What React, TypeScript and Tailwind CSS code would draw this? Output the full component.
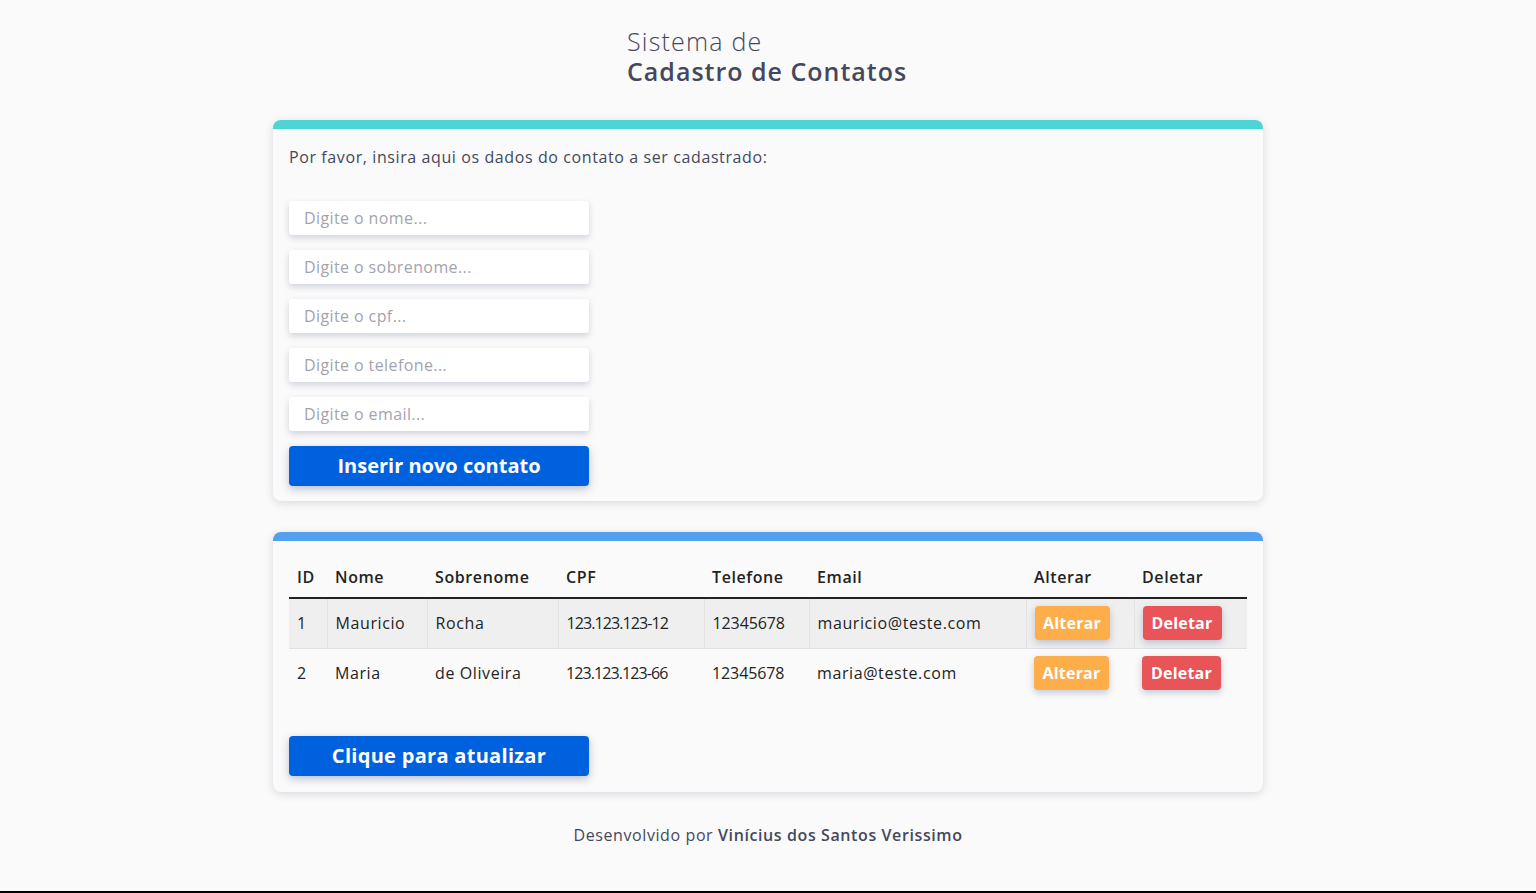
import * as React from "react";

const font = { fontFamily: '"Open Sans", "Noto Sans", sans-serif' };

const campos = [
  "Digite o nome...",
  "Digite o sobrenome...",
  "Digite o cpf...",
  "Digite o telefone...",
  "Digite o email...",
];

const contatos = [
  { id: 1, nome: "Mauricio", sobrenome: "Rocha", cpf: "123.123.123-12", telefone: "12345678", email: "mauricio@teste.com" },
  { id: 2, nome: "Maria", sobrenome: "de Oliveira", cpf: "123.123.123-66", telefone: "12345678", email: "maria@teste.com" },
];

const colunas = [
  { label: "ID", w: "w-[38px]" },
  { label: "Nome", w: "w-[100px]" },
  { label: "Sobrenome", w: "w-[131px]" },
  { label: "CPF", w: "w-[146px]" },
  { label: "Telefone", w: "w-[105px]" },
  { label: "Email", w: "w-[217px]" },
  { label: "Alterar", w: "w-[108px]" },
  { label: "Deletar", w: "w-[113px]" },
];

const cellText = [
  "tracking-normal",
  "",
  "",
  "tracking-[-0.9px]",
  "tracking-[-0.1px]",
  "",
];

export default function App() {
  return (
    <div className="min-h-[893px] bg-[#fafafa] flex flex-col text-[#45485c]" style={font}>
      <div className="flex-1 flex flex-col items-center">
        <header className="mt-[26px] w-[282px] leading-[30px]">
          <div className="text-[25px] font-light tracking-[1.2px]">Sistema de</div>
          <div className="text-[25px] font-semibold tracking-[1px]">Cadastro de Contatos</div>
        </header>

        <section className="mt-[34px] w-[990px] rounded-lg border-t-[9px] border-[#4dd4d5] bg-[#fafafa] px-4 pt-[17px] pb-[15px] shadow-[0_2px_8px_rgba(60,70,100,0.18)]">
          <p className="text-[16px] leading-[22px] tracking-[0.6px] text-[#45485c]">
            Por favor, insira aqui os dados do contato a ser cadastrado:
          </p>
          <form className="mt-[33px] flex w-[300px] flex-col gap-[15px]" onSubmit={(e) => e.preventDefault()}>
            {campos.map((c) => (
              <input
                key={c}
                placeholder={c}
                className="h-[34px] w-full rounded-[3px] bg-white px-[15px] text-[16px] tracking-[0.4px] text-[#333] placeholder:text-[#a3a3ad] shadow-[0_3px_6px_rgba(40,60,110,0.2)] outline-none"
              />
            ))}
            <button className="h-[40px] w-full rounded-[4px] bg-[#0061df] text-[20px] font-bold text-white shadow-[0_3px_8px_rgba(40,60,110,0.3)]">
              Inserir novo contato
            </button>
          </form>
        </section>

        <section className="mt-[31px] w-[990px] rounded-lg border-t-[9px] border-[#539ff0] bg-[#fafafa] px-4 pt-[15px] pb-[16px] shadow-[0_2px_8px_rgba(60,70,100,0.18)]">
          <table className="w-[958px] border-collapse text-left text-[16px] tracking-[0.6px] text-[#232323]">
            <thead>
              <tr className="border-b-2 border-[#222]">
                {colunas.map((c) => (
                  <th key={c.label} className={`${c.w} h-[42px] px-2 font-semibold`}>
                    {c.label}
                  </th>
                ))}
              </tr>
            </thead>
            <tbody>
              {contatos.map((p, i) => (
                <tr key={p.id} className={i === 0 ? "bg-[#efefef] border-b border-[#dfe0e6]" : ""}>
                  {[p.id, p.nome, p.sobrenome, p.cpf, p.telefone, p.email].map((v, j) => (
                    <td key={j} className={`h-[50px] px-2 ${cellText[j]} ${i === 0 && j > 0 ? "border-l border-[#e2e2e2]" : ""}`}>
                      {v}
                    </td>
                  ))}
                  <td className={`px-2 ${i === 0 ? "border-l border-[#e2e2e2]" : ""}`}>
                    <button className="h-[34px] w-[75px] rounded-[4px] bg-[#fdae4b] text-[16px] font-bold tracking-[0.2px] text-white shadow-[0_3px_7px_rgba(40,60,110,0.25)]">
                      Alterar
                    </button>
                  </td>
                  <td className={`px-2 ${i === 0 ? "border-l border-[#e2e2e2]" : ""}`}>
                    <button className="h-[34px] w-[79px] rounded-[4px] bg-[#e95459] text-[16px] font-bold tracking-[0.2px] text-white shadow-[0_3px_7px_rgba(40,60,110,0.25)]">
                      Deletar
                    </button>
                  </td>
                </tr>
              ))}
            </tbody>
          </table>
          <button className="mt-[38px] h-[40px] w-[300px] rounded-[4px] bg-[#0061df] text-[20px] font-bold tracking-[0.3px] text-white shadow-[0_3px_8px_rgba(40,60,110,0.3)]">
            Clique para atualizar
          </button>
        </section>

        <footer className="mt-[31px] text-[16px] tracking-[0.6px] text-[#45485c]">
          Desenvolvido por <span className="font-semibold">Vinícius dos Santos Verissimo</span>
        </footer>
      </div>
      <div className="h-[2px] bg-black" />
    </div>
  );
}
